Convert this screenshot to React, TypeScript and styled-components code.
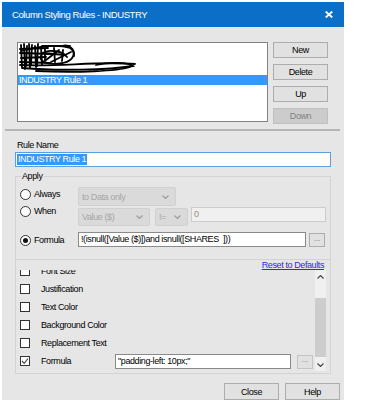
import { useLayoutEffect, useRef } from 'react';
import styled, { createGlobalStyle } from 'styled-components';

const GlobalStyle = createGlobalStyle`
  html, body {
    margin: 0;
    padding: 0;
    background: #fff;
  }
  body {
    font-family: "Liberation Sans", Arial, sans-serif;
    font-size: 9px;
    letter-spacing: -0.4px;
    color: #000;
  }
  #root {
    width: 366px;
    height: 400px;
    overflow: hidden;
  }
`;

const STYLE_ITEMS = ['Font Size', 'Justification', 'Text Color', 'Background Color', 'Replacement Text'];

function Chevron({ color = '#9a9a9a', up = false }: { color?: string; up?: boolean }) {
  return (
    <svg width="7" height="4" viewBox="0 0 7 4">
      <path d={up ? 'M0.5 3.5 L3.5 0.5 L6.5 3.5' : 'M0.5 0.5 L3.5 3.5 L6.5 0.5'} stroke={color} strokeWidth="1.1" fill="none" />
    </svg>
  );
}

// redaction scribble over the first rule name
function Scribble() {
  return (
    <svg width="130" height="30" viewBox="0 0 130 30" fill="none" stroke="#000" strokeWidth="1.8" strokeLinecap="round">
      <path d="M3 2 L4 24 M6 1 L7 26 M9 3 L8 23 M11 1 L12 25 M14 2 L13 22 M17 3 L18 24 M20 1 L19 23 M23 4 L24 22" />
      <path d="M2 6 L30 5 M2 10 L34 11 M3 15 L28 14 M2 19 L32 20" />
      <path d="M3 8 C 20 3, 40 1, 52 5 C 58 9, 57 17, 45 20 C 30 23, 18 18, 24 11 C 28 6, 44 7, 49 14" />
      <path d="M24 3 L 52 3 M25 10 L 47 12 M28 17 L 41 7 M33 19 L 53 9 M44 3 C 51 1, 57 6, 56 13" />
      <path d="M27 6 L27 18 M36 5 L37 19 M45 7 L44 18" />
      <path d="M2 22 C 40 24, 80 18, 117 21" />
      <path d="M4 25 C 40 28, 90 27, 115 23 C 110 19, 90 19, 78 22" />
      <path d="M18 28 C 60 30, 100 28, 112 24" />
    </svg>
  );
}

export default function App() {
  const listRef = useRef<HTMLDivElement>(null);

  useLayoutEffect(() => {
    if (listRef.current) listRef.current.scrollTop = 8;
  }, []);

  return (
    <>
      <GlobalStyle />
      <Window>
        <TitleBar>
          <Title>Column Styling Rules - INDUSTRY</Title>
          <svg width="8" height="7" viewBox="0 0 8 7">
            <path d="M0.7 0.5 L7.3 6.5 M7.3 0.5 L0.7 6.5" stroke="#fff" strokeWidth="1.8" />
          </svg>
        </TitleBar>

        <TopSection>
          <RuleList>
            <Scribble />
            <SelectedItem>INDUSTRY Rule 1</SelectedItem>
          </RuleList>
          <ButtonColumn>
            <DialogButton type="button">New</DialogButton>
            <DialogButton type="button">Delete</DialogButton>
            <DialogButton type="button">Up</DialogButton>
            <DialogButton type="button" disabled>
              Down
            </DialogButton>
          </ButtonColumn>
        </TopSection>

        <Separator />

        <MainSection>
          <FieldLabel>Rule Name</FieldLabel>
          <NameInput>
            <Selection>INDUSTRY Rule 1</Selection>
          </NameInput>

          <ApplyGroup>
            <Legend>Apply</Legend>

            <OptionRow $h={17}>
              <OptionLabel>
                <Radio />
                Always
              </OptionLabel>
              <Combo $w={98} $h={19}>
                to Data only
                <Chevron />
              </Combo>
            </OptionRow>

            <OptionRow $h={28}>
              <OptionLabel>
                <Radio />
                When
              </OptionLabel>
              <Combo $w={72} $h={18} $dy={4}>
                Value ($)
                <Chevron />
              </Combo>
              <Combo $w={33} $h={18} $dy={4} $ml={5}>
                !=
                <Chevron />
              </Combo>
              <TextBox $w={135} $dy={3} $ml={3} $disabled>
                0
              </TextBox>
            </OptionRow>

            <OptionRow $h={15}>
              <OptionLabel $dy={1}>
                <Radio $checked />
                Formula
              </OptionLabel>
              <TextBox $w={228}>!(isnull([Value ($)])and isnull([SHARES&nbsp; ]))</TextBox>
              <DotsButton type="button" $ml={3}>
                ...
              </DotsButton>
            </OptionRow>
          </ApplyGroup>

          <StylesPanel>
            <PanelHeader>
              <ResetLink href="#">Reset to Defaults</ResetLink>
            </PanelHeader>
            <ScrollArea>
              <StyleList ref={listRef}>
                {STYLE_ITEMS.map((item) => (
                  <CheckRow key={item}>
                    <CheckBox />
                    <CheckText>{item}</CheckText>
                  </CheckRow>
                ))}
                <CheckRow>
                  <CheckBox>
                    <svg width="8" height="8" viewBox="0 0 8 8">
                      <path d="M1 4 L3.2 6.3 L7 1.5" stroke="#444" strokeWidth="1.1" fill="none" />
                    </svg>
                  </CheckBox>
                  <CheckText>Formula</CheckText>
                  <TextBox $w={176}>"padding-left: 10px;"</TextBox>
                  <DotsButton type="button" $ml={6} $faded>
                    ...
                  </DotsButton>
                </CheckRow>
              </StyleList>
              <ScrollBar>
                <ScrollArrow>
                  <Chevron color="#404040" up />
                </ScrollArrow>
                <ScrollTrack>
                  <ScrollThumb />
                </ScrollTrack>
                <ScrollArrow>
                  <Chevron color="#404040" />
                </ScrollArrow>
              </ScrollBar>
            </ScrollArea>
          </StylesPanel>
        </MainSection>

        <Footer>
          <DialogButton type="button" $h={17}>
            Close
          </DialogButton>
          <DialogButton type="button" $h={17}>
            Help
          </DialogButton>
        </Footer>
      </Window>
    </>
  );
}

const Window = styled.div`
  width: 342px;
  height: 398px;
  margin: 2px 0 0 2px;
  background: #e6e6e6;
  display: flex;
  flex-direction: column;
  overflow: hidden;
`;

const TitleBar = styled.div`
  flex: none;
  height: 25px;
  background: #0b6fc8;
  display: flex;
  align-items: center;
  justify-content: space-between;
  padding: 0 11px 0 10px;
`;

const Title = styled.span`
  color: #fff;
  font-size: 9.5px;
  letter-spacing: -0.4px;
`;

const TopSection = styled.div`
  display: flex;
  gap: 5px;
  padding: 15px 16px 0 15px;
`;

const RuleList = styled.div`
  width: 251px;
  height: 80px;
  box-sizing: border-box;
  border: 1px solid #828282;
  background: #fff;
`;

const SelectedItem = styled.div`
  height: 10px;
  line-height: 10px;
  background: #3399ff;
  color: #fff;
  padding-left: 1px;
`;

const ButtonColumn = styled.div`
  display: flex;
  flex-direction: column;
  gap: 6px;
  width: 55px;
`;

const DialogButton = styled.button<{ $h?: number }>`
  width: 55px;
  height: ${({ $h }) => $h ?? 16}px;
  box-sizing: border-box;
  padding: 0;
  background: #e1e1e1;
  border: 1px solid #adadad;
  font: inherit;
  font-size: 9px;
  letter-spacing: -0.4px;
  color: #000;

  &:disabled {
    background: #cccccc;
    border-color: #bfbfbf;
    color: #838383;
  }
`;

const Separator = styled.div`
  margin: 5px 4px 0 3px;
  height: 3px;
  box-sizing: border-box;
  border-top: 1px solid #b4b4b4;
  border-bottom: 1px solid #b4b4b4;
`;

const MainSection = styled.div`
  display: flex;
  flex-direction: column;
  padding: 0 13px;
`;

const FieldLabel = styled.div`
  margin-top: 9px;
  padding-left: 2px;
  line-height: 11px;
`;

const NameInput = styled.div`
  margin-top: 1px;
  height: 15px;
  box-sizing: border-box;
  border: 1px solid #5a9de0;
  background: #fff;
  display: flex;
  align-items: center;
  padding-left: 1px;
`;

const Selection = styled.span`
  background: #3399ff;
  color: #fff;
  line-height: 11px;
  padding: 0 1px;
`;

const ApplyGroup = styled.fieldset`
  margin: 4px 0 0;
  padding: 6px 4px 12px;
  border: 1px solid #d3d3d3;
  min-width: 0;
`;

const Legend = styled.legend`
  margin-left: 1px;
  padding: 0 1px;
  line-height: 10px;
`;

const OptionRow = styled.div<{ $h: number }>`
  display: flex;
  align-items: flex-start;
  height: ${({ $h }) => $h}px;
`;

const OptionLabel = styled.label<{ $dy?: number }>`
  flex: none;
  width: 58px;
  height: 14px;
  margin-top: ${({ $dy }) => $dy ?? 0}px;
  display: flex;
  align-items: center;
  gap: 3px;
`;

const Radio = styled.span<{ $checked?: boolean }>`
  flex: none;
  width: 11px;
  height: 11px;
  box-sizing: border-box;
  border: 1px solid #333;
  border-radius: 50%;
  background: #fff;
  display: flex;
  align-items: center;
  justify-content: center;

  &::after {
    content: '';
    display: ${({ $checked }) => ($checked ? 'block' : 'none')};
    width: 5px;
    height: 5px;
    border-radius: 50%;
    background: #111;
  }
`;

const Combo = styled.div<{ $w: number; $h: number; $dy?: number; $ml?: number }>`
  flex: none;
  width: ${({ $w }) => $w}px;
  height: ${({ $h }) => $h}px;
  margin-top: ${({ $dy }) => $dy ?? 0}px;
  margin-left: ${({ $ml }) => $ml ?? 0}px;
  box-sizing: border-box;
  border: 1px solid #d0d0d0;
  border-radius: 2px;
  background: #dadada;
  color: #a6a6a6;
  display: flex;
  align-items: center;
  justify-content: space-between;
  padding: 0 6px 0 3px;
`;

const TextBox = styled.div<{ $w: number; $dy?: number; $ml?: number; $disabled?: boolean }>`
  flex: none;
  width: ${({ $w }) => $w}px;
  height: 15px;
  margin-top: ${({ $dy }) => $dy ?? 0}px;
  margin-left: ${({ $ml }) => $ml ?? 0}px;
  box-sizing: border-box;
  border: 1px solid ${({ $disabled }) => ($disabled ? '#cccccc' : '#8a8a8a')};
  background: ${({ $disabled }) => ($disabled ? '#f0f0f0' : '#fff')};
  color: ${({ $disabled }) => ($disabled ? '#9a8a7a' : '#000')};
  line-height: 13px;
  padding-left: 2px;
  white-space: nowrap;
  overflow: hidden;
`;

const DotsButton = styled.button<{ $ml?: number; $faded?: boolean }>`
  flex: none;
  width: 16px;
  height: 14px;
  margin-top: 1px;
  margin-left: ${({ $ml }) => $ml ?? 0}px;
  box-sizing: border-box;
  padding: 0 0 3px;
  background: #e1e1e1;
  border: 1px solid ${({ $faded }) => ($faded ? '#c4c4c4' : '#adadad')};
  color: #777;
  font: inherit;
  font-size: 8px;
  letter-spacing: 0;
  line-height: 8px;
`;

const StylesPanel = styled.div`
  height: 114px;
  box-sizing: border-box;
  border: 1px solid #d3d3d3;
  border-top: none;
  display: flex;
  flex-direction: column;
`;

const PanelHeader = styled.div`
  flex: none;
  height: 10px;
  display: flex;
  justify-content: flex-end;
  padding-right: 6px;
`;

const ResetLink = styled.a`
  color: #2a2af0;
  text-decoration: underline;
  line-height: 11px;
`;

const ScrollArea = styled.div`
  flex: none;
  height: 101px;
  display: flex;
  padding-right: 4px;
`;

const StyleList = styled.div`
  flex: 1;
  overflow: hidden;

  &::after {
    content: '';
    display: block;
    height: 12px;
  }
`;

const CheckRow = styled.div`
  height: 18px;
  display: flex;
  align-items: center;
  padding-left: 4px;
`;

const CheckBox = styled.span`
  flex: none;
  width: 10px;
  height: 10px;
  box-sizing: border-box;
  border: 1px solid #333;
  background: #fff;
  display: flex;
  align-items: center;
  justify-content: center;
`;

const CheckText = styled.span`
  flex: none;
  width: 74px;
  margin-left: 11px;
`;

const ScrollBar = styled.div`
  flex: none;
  width: 11px;
  background: #f0f0f0;
  display: flex;
  flex-direction: column;
`;

const ScrollArrow = styled.div`
  flex: none;
  height: 13px;
  display: flex;
  align-items: center;
  justify-content: center;
`;

const ScrollTrack = styled.div`
  flex: 1;
`;

const ScrollThumb = styled.div`
  margin-top: 15px;
  height: 59px;
  background: #cdcdcd;
`;

const Footer = styled.div`
  display: flex;
  justify-content: flex-end;
  gap: 6px;
  padding: 9px 4px 0 0;
`;
